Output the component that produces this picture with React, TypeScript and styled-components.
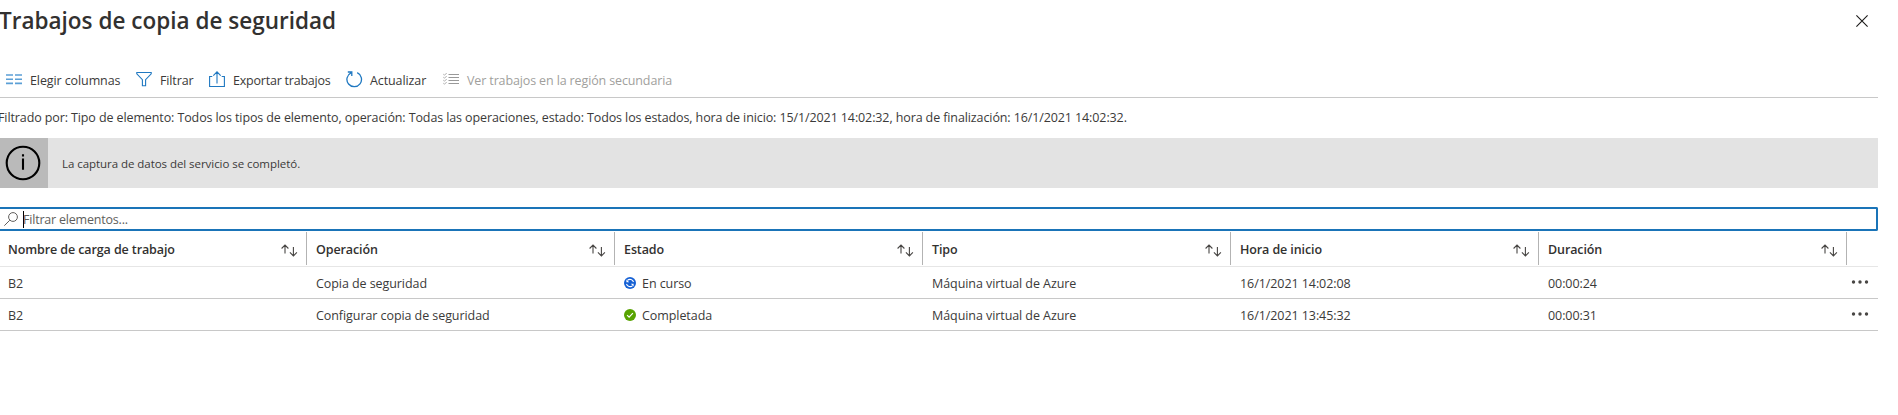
import React from 'react';
import styled, { createGlobalStyle } from 'styled-components';

const GlobalStyle = createGlobalStyle`
  * { box-sizing: border-box; }
  body {
    margin: 0;
    background: #fff;
    color: #3b3a39;
    font-family: 'Open Sans', 'Noto Sans', sans-serif;
    font-size: 12.5px;
    overflow: hidden;
  }
`;

const Blade = styled.main`
  width: 1878px;
  display: flex;
  flex-direction: column;
`;

const Header = styled.header`
  height: 60px;
  padding: 0 10px 0 0;
  display: flex;
  justify-content: space-between;
  align-items: flex-start;
`;

const Title = styled.h1`
  margin: 5px 0 0 -1px;
  font-size: 22.5px;
  line-height: 32px;
  font-weight: 600;
  letter-spacing: 0.01px;
  color: #323130;
  white-space: nowrap;
`;

const CloseButton = styled.button`
  margin: 15px 0 0;
  padding: 0;
  border: 0;
  background: none;
  width: 12px;
  height: 12px;
  display: flex;
`;

const Toolbar = styled.nav`
  height: 38px;
  padding-left: 6px;
  display: flex;
  border-bottom: 1px solid #c8c8c8;
`;

const Command = styled.button<{ $width: number; $gap?: number; $track?: number; $disabled?: boolean }>`
  width: ${p => p.$width}px;
  flex: none;
  padding: 0;
  border: 0;
  background: none;
  display: flex;
  align-items: flex-start;
  gap: ${p => p.$gap ?? 8}px;
  font: inherit;
  line-height: 20px;
  letter-spacing: ${p => p.$track ?? -0.1}px;
  color: ${p => (p.$disabled ? '#a19f9d' : '#3b3a39')};
  white-space: nowrap;

  svg { margin-top: 11px; flex: none; }
  span { margin-top: 11px; }
`;

const FilterSummary = styled.p`
  margin: 0 0 0 -2px;
  height: 40px;
  line-height: 40px;
  letter-spacing: -0.107px;
  white-space: nowrap;
`;

const Banner = styled.section`
  height: 50px;
  display: flex;
  align-items: center;
  background: #e3e3e3;
  font-size: 11.5px;
  letter-spacing: -0.05px;
`;

const BannerIcon = styled.div`
  width: 48px;
  height: 50px;
  margin-right: 14px;
  background: #bababa;
`;

const SearchBox = styled.label`
  margin-top: 19px;
  height: 24px;
  display: flex;
  align-items: center;
  border: 2px solid #1a74b8;
  border-left: 0;
  border-radius: 0 2px 2px 0;
  padding-left: 4px;
  color: #605e5c;
  letter-spacing: -0.2px;
`;

const Caret = styled.i`
  width: 1px;
  height: 17px;
  margin: 0 -1px 0 5px;
  background: #000;
`;

const Grid = styled.div`
  display: flex;
  flex-direction: column;
`;

const HeadRow = styled.div`
  height: 36px;
  display: grid;
  grid-template-columns: 307px repeat(5, 308px) 1fr;
  padding-bottom: 1px;
  border-bottom: 1px solid #e6e6e6;
  color: #323130;
  font-weight: 600;
  letter-spacing: -0.1px;
`;

const HeadCell = styled.div`
  height: 33px;
  margin-top: 1px;
  padding: 3px 8px 0 9px;
  display: flex;
  align-items: center;
  justify-content: space-between;
  border-right: 1px solid #b3b3b3;
  line-height: 30px;

  &:first-child { padding-left: 8px; }
`;

const Row = styled.div`
  height: 32px;
  display: grid;
  grid-template-columns: 307px repeat(5, 308px) 1fr;
  border-bottom: 1px solid #c8c8c8;
  letter-spacing: -0.07px;
`;

const Cell = styled.div`
  padding: 2px 0 0 9px;
  display: flex;
  align-items: center;
  line-height: 29px;
  white-space: nowrap;

  &:first-child { padding-left: 8px; }
`;

const StatusIcon = styled.svg`
  width: 12px;
  height: 12px;
  margin: -1px 6px 0 0;
`;

const MoreButton = styled.button`
  border: 0;
  background: none;
  padding: 12px 0 0 4px;
  display: flex;
  align-items: flex-start;
`;

const Stroke = (p: React.SVGProps<SVGSVGElement>) => (
  <svg fill="none" stroke="#1f78c1" strokeWidth="1.1" {...p} />
);

const ColumnsIcon = () => (
  <Stroke width="16" height="16" strokeWidth="1.6" stroke="#5b9fd6">
    <path d="M0 4h7M9 4h7M0 8.2h7M9 8.2h7M0 12.4h7M9 12.4h7" />
  </Stroke>
);

const FunnelIcon = () => (
  <Stroke width="16" height="16">
    <path d="M.8 1.5h14.4v1.3L9.6 8.6v6.2H6.4V8.6L.8 2.8z" />
  </Stroke>
);

const ExportIcon = () => (
  <Stroke width="16" height="16">
    <path d="M3.3 5.5H.6v10h14.8v-10h-2.7M8 12.5V1M4.3 4.6 8 .9l3.7 3.7" />
  </Stroke>
);

const RefreshIcon = () => (
  <Stroke width="17" height="17" strokeWidth="1.3">
    <path d="M11.2 1.7A7.3 7.3 0 1 1 5 1.8M1.8 1h4v4" />
  </Stroke>
);

const TasksIcon = () => (
  <Stroke width="16" height="16" stroke="#999" strokeWidth="1">
    <path d="M5.5 3.5H16M5.5 6.5H16M5.5 9.5H16M5.5 12.5H16" />
    <path d="M.3 3.2l1.2 1 2.2-2.2M.3 6.2l1.2 1 2.2-2.2M.3 9.2l1.2 1 2.2-2.2M.3 12.2l1.2 1 2.2-2.2" strokeWidth=".8" />
  </Stroke>
);

const SearchIcon = () => (
  <Stroke width="14" height="15" stroke="#605e5c" strokeWidth="1">
    <circle cx="9" cy="5" r="4.4" />
    <path d="M5.8 8.2.3 13.7" />
  </Stroke>
);

const SortIcon = () => (
  <Stroke width="17" height="13" stroke="#484644" strokeWidth="1.1">
    <path d="M4 9.5V1.2M.6 4.5 4 1.1l3.4 3.4M12.4 3v8.8M8.9 8.4l3.5 3.5 3.5-3.5" />
  </Stroke>
);

const InfoIcon = () => (
  <svg width="48" height="50" fill="none" stroke="#000" strokeWidth="2.1">
    <circle cx="23" cy="25" r="16.3" />
    <path d="M23 20.6v11.2M23 16.2v2.3" />
  </svg>
);

const Status = ({ done }: { done: boolean }) =>
  done ? (
    <StatusIcon viewBox="0 0 12 12" fill="none">
      <circle cx="6" cy="6" r="6" fill="#57a300" />
      <path d="m3.1 6.2 2 2 3.8-4" stroke="#fff" strokeWidth="1.2" />
    </StatusIcon>
  ) : (
    <StatusIcon viewBox="0 0 12 12" fill="none">
      <circle cx="6" cy="6" r="6" fill="#1560d4" />
      <path d="M9.5 5A3.7 3.7 0 0 0 3.4 3.4M2.5 7a3.7 3.7 0 0 0 6.1 1.6" stroke="#fff" strokeWidth="1.1" />
      <path d="M2.4 2.4v2.8h2.8zM9.6 9.6V6.8H6.8z" fill="#fff" />
    </StatusIcon>
  );

const headings = ['Nombre de carga de trabajo', 'Operación', 'Estado', 'Tipo', 'Hora de inicio', 'Duración'];

const jobs = [
  { name: 'B2', operation: 'Copia de seguridad', status: 'En curso', type: 'Máquina virtual de Azure', start: '16/1/2021 14:02:08', duration: '00:00:24' },
  { name: 'B2', operation: 'Configurar copia de seguridad', status: 'Completada', type: 'Máquina virtual de Azure', start: '16/1/2021 13:45:32', duration: '00:00:31' },
];

export default function App() {
  return (
    <Blade>
      <GlobalStyle />
      <Header>
        <Title>Trabajos de copia de seguridad</Title>
        <CloseButton aria-label="Cerrar">
          <Stroke width="12" height="12" stroke="#1b1a19">
            <path d="m.4.4 11.2 11.2M11.6.4.4 11.6" />
          </Stroke>
        </CloseButton>
      </Header>
      <Toolbar>
        <Command $width={130} $track={-0.1}><ColumnsIcon /><span>Elegir columnas</span></Command>
        <Command $width={73} $track={-0.13}><FunnelIcon /><span>Filtrar</span></Command>
        <Command $width={137} $track={-0.22}><ExportIcon /><span>Exportar trabajos</span></Command>
        <Command $width={97} $gap={7}><RefreshIcon /><span>Actualizar</span></Command>
        <Command $width={240} $disabled $track={-0.13}><TasksIcon /><span>Ver trabajos en la región secundaria</span></Command>
      </Toolbar>
      <FilterSummary>
        Filtrado por: Tipo de elemento: Todos los tipos de elemento, operación: Todas las operaciones, estado: Todos los estados, hora de inicio: 15/1/2021 14:02:32, hora de finalización: 16/1/2021 14:02:32.
      </FilterSummary>
      <Banner>
        <BannerIcon><InfoIcon /></BannerIcon>
        La captura de datos del servicio se completó.
      </Banner>
      <SearchBox>
        <SearchIcon />
        <Caret />
        Filtrar elementos...
      </SearchBox>
      <Grid>
        <HeadRow>
          {headings.map(h => (
            <HeadCell key={h}>{h}<SortIcon /></HeadCell>
          ))}
        </HeadRow>
        {jobs.map(j => (
          <Row key={j.start}>
            <Cell>{j.name}</Cell>
            <Cell>{j.operation}</Cell>
            <Cell><Status done={j.status === 'Completada'} />{j.status}</Cell>
            <Cell>{j.type}</Cell>
            <Cell>{j.start}</Cell>
            <Cell>{j.duration}</Cell>
            <MoreButton aria-label="Más">
              <svg width="18" height="6" fill="#484644">
                <circle cx="2.5" cy="3" r="1.7" />
                <circle cx="9" cy="3" r="1.7" />
                <circle cx="15.5" cy="3" r="1.7" />
              </svg>
            </MoreButton>
          </Row>
        ))}
      </Grid>
    </Blade>
  );
}
